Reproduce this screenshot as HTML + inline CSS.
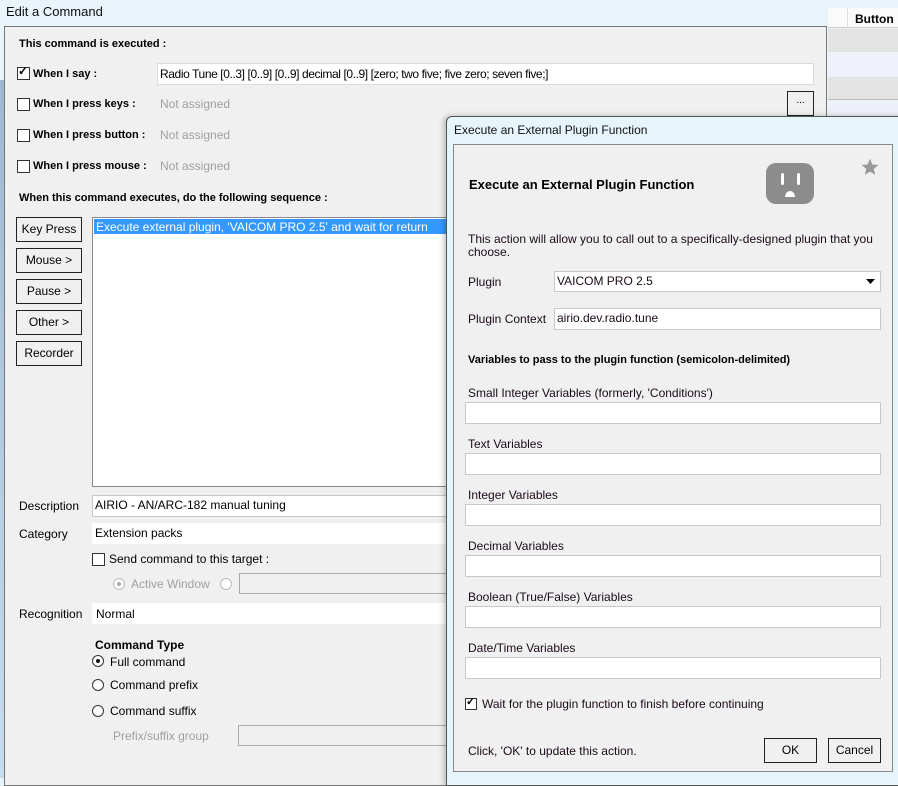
<!DOCTYPE html>
<html><head><meta charset="utf-8"><style>
*{box-sizing:border-box;margin:0;padding:0}
body{width:898px;height:778px;overflow:hidden;position:relative;background:#e8f3fa;font-family:"Liberation Sans",sans-serif;font-size:12px;color:#000}
.a{position:absolute;white-space:nowrap}
.b{font-weight:bold;font-size:11px}
.g{color:#a0a0a0}
.tb{position:absolute;background:#fff;border:1px solid #c8c8c8}
.cb{position:absolute;width:13px;height:13px;border:1px solid #333;background:#fff}
.btn{position:absolute;border:1px solid #222;background:#f0f0f0;text-align:center;font-size:12px;line-height:22px}
.rd{position:absolute;width:12px;height:12px;border:1px solid #333;border-radius:50%;background:#fff}
.d{font-size:12px;color:#1a0a1a}
</style></head><body>
<div class="a" style="left:828px;top:8px;width:70px;height:20px;background:#fafafa;border-bottom:1px solid #ccc"></div>
<div class="a" style="left:847px;top:8px;width:1px;height:20px;background:#ddd"></div>
<div class="a" style="left:855px;top:12px;font-size:12px;font-weight:bold">Button</div>
<div class="a" style="left:828px;top:29px;width:70px;height:23px;background:#e3e3e3"></div>
<div class="a" style="left:828px;top:52px;width:70px;height:25px;background:#eef1f9"></div>
<div class="a" style="left:828px;top:77px;width:70px;height:23px;background:#e3e3e3;border-bottom:1px solid #bbb"></div>
<div class="a" style="left:828px;top:101px;width:70px;height:15px;background:#eef1f9"></div>
<div class="a" style="left:0;top:80px;width:4px;height:698px;background:linear-gradient(#9fb8d0,#c8dcec)"></div>

<div class="a" style="left:6px;top:4px;font-size:13px;color:#111">Edit a Command</div>
<div class="a" style="left:4px;top:26px;width:823px;height:760px;background:#f0f0f0;border:1px solid #777"></div>

<div class="a b" style="left:19px;top:38px">This command is executed :</div>
<div class="cb" style="left:17px;top:67px"></div>
<div class="a" style="left:18px;top:64px;font-size:12px;font-weight:bold">✓</div>
<div class="a b" style="left:33px;top:68px">When I say :</div>
<div class="tb" style="left:157px;top:63px;width:657px;height:22px;border-color:#dcdcdc"></div>
<div class="a" style="left:160px;top:67px;letter-spacing:-0.4px">Radio Tune [0..3] [0..9] [0..9] decimal [0..9] [zero; two five; five zero; seven five;]</div>
<div class="cb" style="left:17px;top:98px"></div>
<div class="a b" style="left:33px;top:98px">When I press keys :</div>
<div class="a g" style="left:160px;top:97px">Not assigned</div>
<div class="cb" style="left:17px;top:129px"></div>
<div class="a b" style="left:33px;top:129px">When I press button :</div>
<div class="a g" style="left:160px;top:128px">Not assigned</div>
<div class="cb" style="left:17px;top:160px"></div>
<div class="a b" style="left:33px;top:160px">When I press mouse :</div>
<div class="a g" style="left:160px;top:159px">Not assigned</div>
<div class="btn" style="left:787px;top:91px;width:27px;height:25px;line-height:18px;font-size:10px">...</div>

<div class="a b" style="left:19px;top:192px">When this command executes, do the following sequence :</div>
<div class="btn" style="left:16px;top:217px;width:66px;height:25px">Key Press</div>
<div class="btn" style="left:16px;top:248px;width:66px;height:25px">Mouse &gt;</div>
<div class="btn" style="left:16px;top:279px;width:66px;height:25px">Pause &gt;</div>
<div class="btn" style="left:16px;top:310px;width:66px;height:25px">Other &gt;</div>
<div class="btn" style="left:16px;top:341px;width:66px;height:25px">Recorder</div>
<div class="tb" style="left:92px;top:217px;width:380px;height:270px;border-color:#888"></div>
<div class="a" style="left:94px;top:219px;width:360px;height:15px;background:#3399ff"></div>
<div class="a" style="left:96px;top:220px;color:#fff">Execute external plugin, 'VAICOM PRO 2.5' and wait for return</div>

<div class="a" style="left:19px;top:499px">Description</div>
<div class="tb" style="left:92px;top:495px;width:380px;height:22px"></div>
<div class="a" style="left:95px;top:498px">AIRIO - AN/ARC-182 manual tuning</div>
<div class="a" style="left:19px;top:527px">Category</div>
<div class="a" style="left:92px;top:523px;width:360px;height:21px;background:#fff"></div>
<div class="a" style="left:95px;top:526px">Extension packs</div>
<div class="cb" style="left:92px;top:553px"></div>
<div class="a" style="left:109px;top:552px">Send command to this target :</div>
<div class="rd" style="left:113px;top:578px;border-color:#bbb"></div>
<div class="a" style="left:117px;top:582px;width:4px;height:4px;border-radius:50%;background:#aaa"></div>
<div class="a g" style="left:131px;top:577px">Active Window</div>
<div class="rd" style="left:220px;top:578px;border-color:#bbb"></div>
<div class="a" style="left:239px;top:573px;width:220px;height:21px;border:1px solid #aaa;background:#f0f0f0"></div>
<div class="a" style="left:19px;top:607px">Recognition</div>
<div class="a" style="left:92px;top:603px;width:360px;height:21px;background:#fff"></div>
<div class="a" style="left:96px;top:607px">Normal</div>
<div class="a b" style="left:95px;top:638px;font-size:12px">Command Type</div>
<div class="rd" style="left:92px;top:655px"></div>
<div class="a" style="left:96px;top:659px;width:4px;height:4px;border-radius:50%;background:#111"></div>
<div class="a" style="left:110px;top:655px">Full command</div>
<div class="rd" style="left:92px;top:679px"></div>
<div class="a" style="left:110px;top:678px">Command prefix</div>
<div class="rd" style="left:92px;top:705px"></div>
<div class="a" style="left:110px;top:704px">Command suffix</div>
<div class="a g" style="left:113px;top:729px">Prefix/suffix group</div>
<div class="a" style="left:238px;top:725px;width:220px;height:21px;border:1px solid #aaa;background:#f0f0f0"></div>

<div class="a" style="left:446px;top:116px;width:460px;height:670px;background:#e6f4fb;border:1px solid #555;border-radius:6px 6px 0 0;box-shadow:-2px 0 6px rgba(0,0,0,.25)"></div>
<div class="a" style="left:454px;top:123px;font-size:12px;color:#111">Execute an External Plugin Function</div>
<div class="a" style="left:453px;top:144px;width:440px;height:628px;background:#f0f0f0;border:1px solid #888"></div>
<div class="a" style="left:469px;top:177px;font-size:13px;font-weight:bold">Execute an External Plugin Function</div>
<svg class="a" style="left:766px;top:163px" width="48" height="41" viewBox="0 0 48 41"><rect x="0" y="0" width="48" height="41" rx="10" fill="#8c8c8c"/><rect x="15" y="10" width="3" height="12" rx="1.5" fill="#fff"/><rect x="31" y="10" width="3" height="12" rx="1.5" fill="#fff"/><path d="M19 34 A5 6 0 0 1 29 34 Z" fill="#fff"/></svg>
<svg class="a" style="left:861px;top:158px" width="18" height="18" viewBox="0 0 24 24"><path d="M12 1l3.1 7.6 8.2.6-6.3 5.3 2 8-7-4.3-7 4.3 2-8L.7 9.2l8.2-.6z" fill="#999"/></svg>
<div class="a d" style="left:468px;top:232px">This action will allow you to call out to a specifically-designed plugin that you</div>
<div class="a d" style="left:468px;top:245px">choose.</div>
<div class="a d" style="left:468px;top:275px">Plugin</div>
<div class="tb" style="left:554px;top:271px;width:327px;height:21px"></div>
<div class="a d" style="left:557px;top:274px">VAICOM PRO 2.5</div>
<svg class="a" style="left:866px;top:279px" width="9" height="5"><path d="M0 0h9L4.5 5z" fill="#000"/></svg>
<div class="a d" style="left:468px;top:312px">Plugin Context</div>
<div class="tb" style="left:554px;top:308px;width:327px;height:22px"></div>
<div class="a d" style="left:557px;top:311px">airio.dev.radio.tune</div>
<div class="a" style="left:468px;top:354px;font-size:11px;font-weight:bold">Variables to pass to the plugin function (semicolon-delimited)</div>
<div class="a d" style="left:468px;top:386px">Small Integer Variables (formerly, 'Conditions')</div>
<div class="tb" style="left:465px;top:402px;width:416px;height:22px"></div>
<div class="a d" style="left:468px;top:437px">Text Variables</div>
<div class="tb" style="left:465px;top:453px;width:416px;height:22px"></div>
<div class="a d" style="left:468px;top:488px">Integer Variables</div>
<div class="tb" style="left:465px;top:504px;width:416px;height:22px"></div>
<div class="a d" style="left:468px;top:539px">Decimal Variables</div>
<div class="tb" style="left:465px;top:555px;width:416px;height:22px"></div>
<div class="a d" style="left:468px;top:590px">Boolean (True/False) Variables</div>
<div class="tb" style="left:465px;top:606px;width:416px;height:22px"></div>
<div class="a d" style="left:468px;top:641px">Date/Time Variables</div>
<div class="tb" style="left:465px;top:657px;width:416px;height:22px"></div>
<div class="cb" style="left:465px;top:698px;width:12px;height:12px"></div>
<div class="a" style="left:466px;top:695px;font-size:11px;font-weight:bold">✓</div>
<div class="a d" style="left:482px;top:697px">Wait for the plugin function to finish before continuing</div>
<div class="a d" style="left:468px;top:744px">Click, 'OK' to update this action.</div>
<div class="btn" style="left:764px;top:738px;width:53px;height:25px">OK</div>
<div class="btn" style="left:828px;top:738px;width:53px;height:25px">Cancel</div>
</body></html>
